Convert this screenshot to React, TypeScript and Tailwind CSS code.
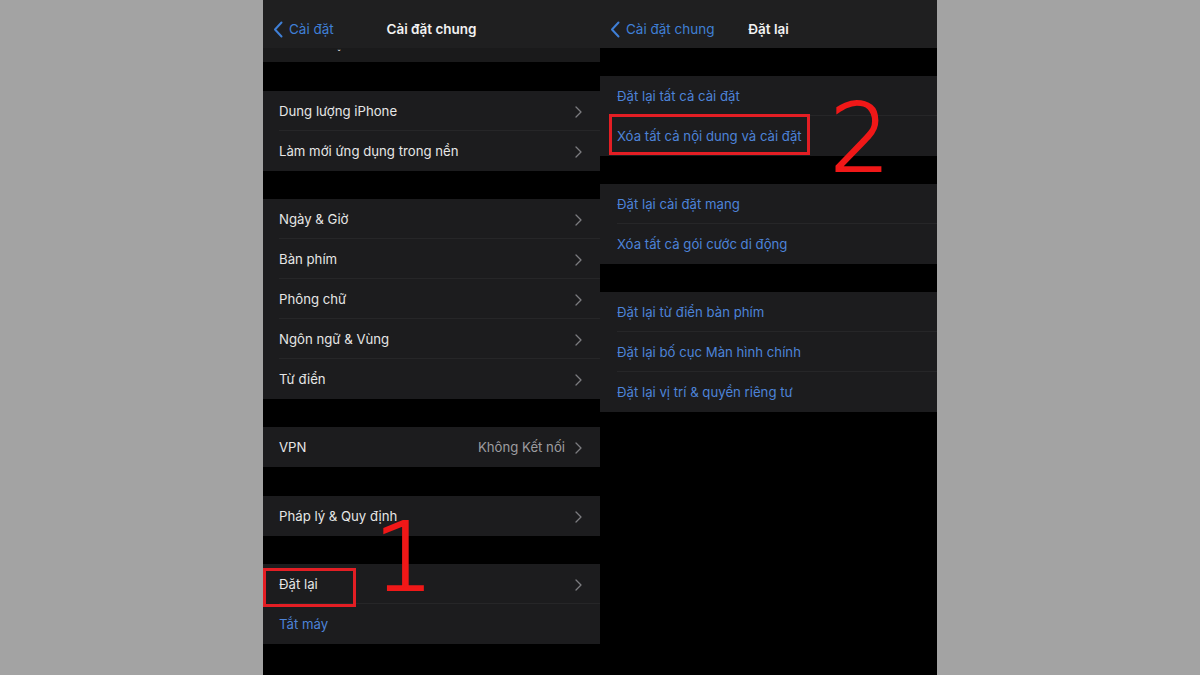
import React from "react";

const font = { fontFamily: "Inter, 'Noto Sans', sans-serif" };

function Chevron() {
  return (
    <svg width="7" height="12" viewBox="0 0 7 12" className="shrink-0">
      <path d="M1 1l5 5-5 5" fill="none" stroke="#7c7c80" strokeWidth="1.3" strokeLinecap="round" strokeLinejoin="round" />
    </svg>
  );
}

function BackChevron() {
  return (
    <svg width="10" height="17" viewBox="0 0 10 17" className="shrink-0">
      <path d="M8.5 1.5L2 8.5l6.5 7" fill="none" stroke="#3f7fd6" strokeWidth="2" strokeLinecap="round" strokeLinejoin="round" />
    </svg>
  );
}

type Item = { label: string; value?: string; blue?: boolean; chevron?: boolean };

function Group({ items, inset }: { items: Item[]; inset: string }) {
  return (
    <div className={`bg-[#1c1c1e] ${inset}`}>
      {items.map((it, i) => (
        <div key={it.label} className="h-[40px] flex items-center">
          <div
            className={`flex-1 h-full pt-[2px] flex items-center pr-[18px] ${
              i < items.length - 1 ? "border-b border-[#262628]" : ""
            }`}
          >
            <span className={`flex-1 text-[13.2px] ${it.blue ? "text-[#4d83d8]" : "text-[#e6e6e6]"}`}>
              {it.label}
            </span>
            {it.value && <span className="text-[13.2px] text-[#9c9ca0] mr-[10px]">{it.value}</span>}
            {it.chevron && <Chevron />}
          </div>
        </div>
      ))}
    </div>
  );
}

function Header({ back, title }: { back: string; title: string }) {
  return (
    <div className="h-[48px] pt-[10px] bg-[#1f1f20] grid grid-cols-[1fr_auto_1fr] items-center">
      <div className="flex items-center gap-[6px] pl-[10px]">
        <BackChevron />
        <span className="text-[13.5px] text-[#3f7fd6]">{back}</span>
      </div>
      <div className="text-[13.5px] font-semibold text-[#f2f2f2]">{title}</div>
      <div />
    </div>
  );
}

const numeral = "absolute text-[94px] leading-none text-[#f01818] [-webkit-text-stroke:2px_#f01818]";
const numeralFont = { fontFamily: "'DejaVu Sans', sans-serif", fontWeight: 200 };

export default function App() {
  return (
    <div className="w-[1200px] h-[675px] bg-[#a3a3a3] flex justify-center overflow-hidden" style={font}>
      {/* left phone */}
      <div className="relative w-[337px] h-full bg-black flex flex-col">
        <Header back="Cài đặt" title="Cài đặt chung" />
        <div className="h-[14px] bg-[#1a1a1b] pl-[74px] text-[10px] leading-[10px] text-[#cfcfcf]">ˇ</div>
        <div className="h-[29px]" />
        <Group
          inset="pl-[16px]"
          items={[
            { label: "Dung lượng iPhone", chevron: true },
            { label: "Làm mới ứng dụng trong nền", chevron: true },
          ]}
        />
        <div className="h-[28px]" />
        <Group
          inset="pl-[16px]"
          items={[
            { label: "Ngày & Giờ", chevron: true },
            { label: "Bàn phím", chevron: true },
            { label: "Phông chữ", chevron: true },
            { label: "Ngôn ngữ & Vùng", chevron: true },
            { label: "Từ điển", chevron: true },
          ]}
        />
        <div className="h-[28px]" />
        <Group inset="pl-[16px]" items={[{ label: "VPN", value: "Không Kết nối", chevron: true }]} />
        <div className="h-[29px]" />
        <Group inset="pl-[16px]" items={[{ label: "Pháp lý & Quy định", chevron: true }]} />
        <div className="h-[28px]" />
        <Group
          inset="pl-[16px]"
          items={[
            { label: "Đặt lại", chevron: true },
            { label: "Tắt máy", blue: true },
          ]}
        />

        {/* annotation */}
        <div className="absolute left-0 top-[568px] w-[93px] h-[39px] border-[3px] border-[#e31e24]" />
        <span className={`${numeral} left-[111px] top-[511px]`} style={numeralFont}>
          1
        </span>
      </div>

      {/* right phone */}
      <div className="relative w-[337px] h-full bg-black flex flex-col">
        <Header back="Cài đặt chung" title="Đặt lại" />
        <div className="h-[28px]" />
        <Group
          inset="pl-[17px]"
          items={[
            { label: "Đặt lại tất cả cài đặt", blue: true },
            { label: "Xóa tất cả nội dung và cài đặt", blue: true },
          ]}
        />
        <div className="h-[28px]" />
        <Group
          inset="pl-[17px]"
          items={[
            { label: "Đặt lại cài đặt mạng", blue: true },
            { label: "Xóa tất cả gói cước di động", blue: true },
          ]}
        />
        <div className="h-[28px]" />
        <Group
          inset="pl-[17px]"
          items={[
            { label: "Đặt lại từ điển bàn phím", blue: true },
            { label: "Đặt lại bố cục Màn hình chính", blue: true },
            { label: "Đặt lại vị trí & quyền riêng tư", blue: true },
          ]}
        />

        {/* annotation */}
        <div className="absolute left-[9px] top-[114px] w-[201px] h-[41px] border-[3px] border-[#e31e24]" />
        <span className={`${numeral} left-[230px] top-[92px]`} style={numeralFont}>
          2
        </span>
      </div>
    </div>
  );
}
